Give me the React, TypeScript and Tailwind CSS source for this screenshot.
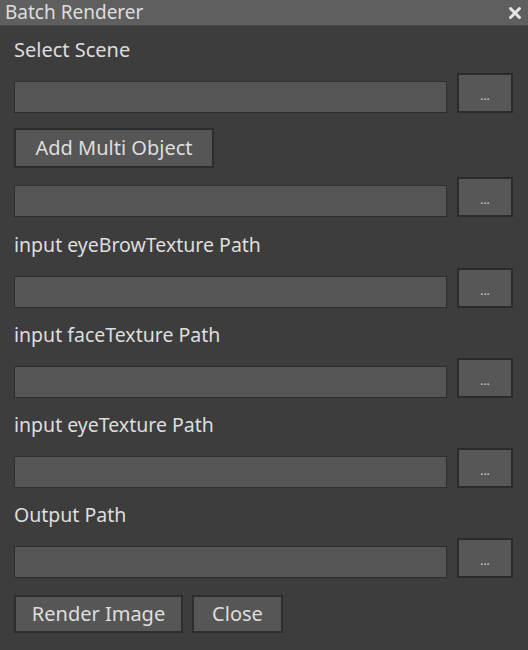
import { X } from "lucide-react"

const font = { fontFamily: '"Noto Sans", "Liberation Sans", sans-serif' }

function PathRow({ mt = "mt-[11px]" }: { mt?: string }) {
  return (
    <div className={`flex items-end gap-[10px] ${mt}`}>
      <div className="flex-1 h-[32px] bg-[#555555] border border-[#2d2d2d]" />
      <button className="w-[56px] h-[40px] bg-[#575757] border-2 border-[#2b2b2b] text-[#cfcfcf] text-[12px] leading-none pt-[6px]">
        ...
      </button>
    </div>
  )
}

function Label({ text, mt = "mt-[15px]" }: { text: string; mt?: string }) {
  return <div className={`h-[24px] leading-[24px] text-[19.5px] text-[#dedede] ${mt}`}>{text}</div>
}

function Btn({ text, w, h = "h-[40px]" }: { text: string; w: string; h?: string }) {
  return (
    <button
      className={`${w} ${h} bg-[#565656] border-2 border-[#2e2e2e] text-[20px] text-[#dedede] leading-none`}
    >
      {text}
    </button>
  )
}

export default function App() {
  return (
    <div className="w-[528px] h-[650px] bg-[#3d3d3d] flex flex-col" style={font}>
      <div className="h-[26px] bg-[#5f5f5f] flex items-center justify-between pl-[5px] pr-[4px] border-b border-[#4a4a4a]">
        <span className="text-[19px] text-[#dedede] leading-none">Batch Renderer</span>
        <X className="w-[18px] h-[18px] text-[#e6e6e6]" strokeWidth={4} />
      </div>
      <div className="flex flex-col pl-[14px] pr-[15px] pt-[12px]">
        <div className="h-[24px] leading-[24px] text-[20px] text-[#dedede]">Select Scene</div>
        <PathRow />
        <div className="mt-[15px]">
          <Btn text="Add Multi Object" w="w-[200px]" />
        </div>
        <PathRow mt="mt-[9px]" />
        <Label text="input eyeBrowTexture Path" mt="mt-[16px]" />
        <PathRow />
        <Label text="input faceTexture Path" />
        <PathRow />
        <Label text="input eyeTexture Path" />
        <PathRow />
        <Label text="Output Path" />
        <PathRow />
        <div className="flex gap-[9px] mt-[17px]">
          <Btn text="Render Image" w="w-[169px]" h="h-[38px]" />
          <Btn text="Close" w="w-[91px]" h="h-[38px]" />
        </div>
      </div>
    </div>
  )
}
